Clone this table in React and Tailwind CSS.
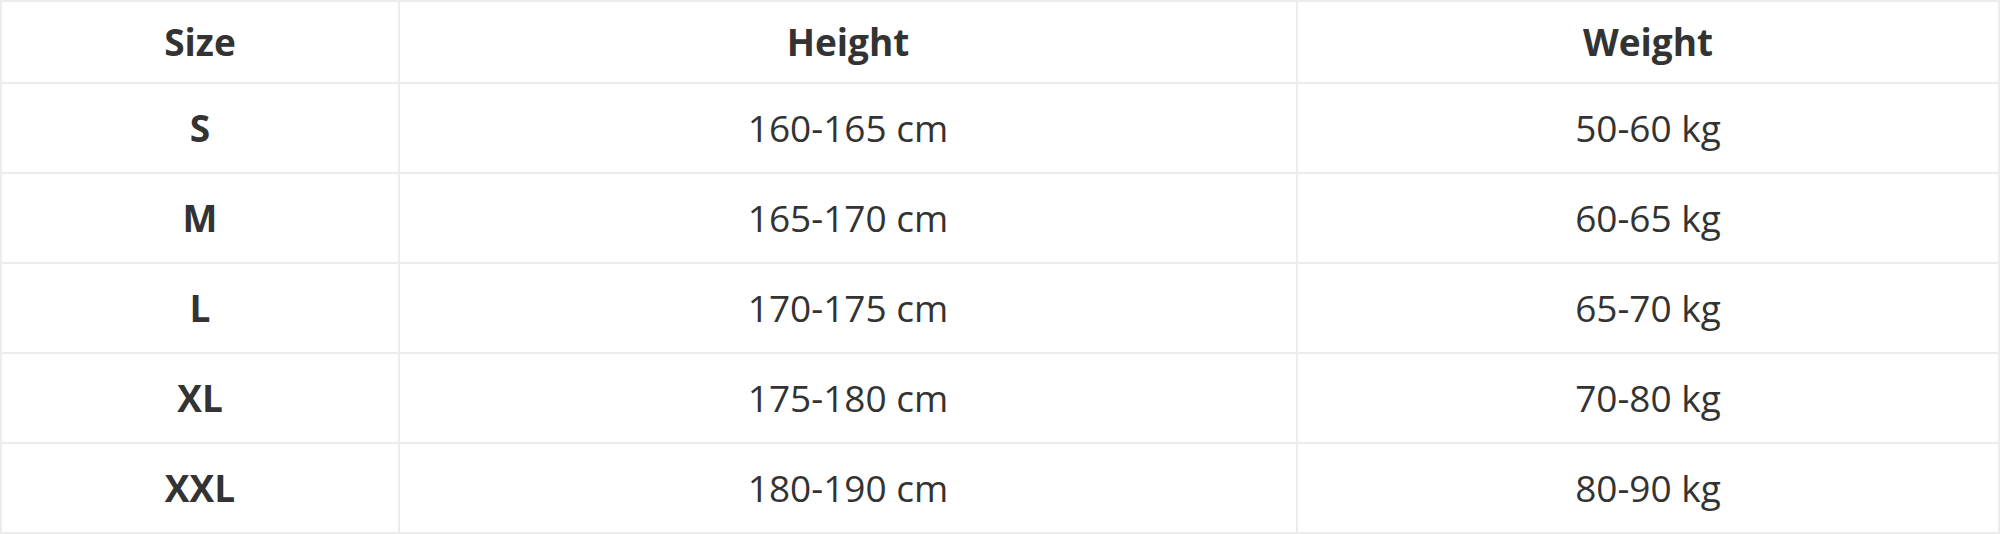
const rows = [
  { size: 'S', height: '160-165 cm', weight: '50-60 kg' },
  { size: 'M', height: '165-170 cm', weight: '60-65 kg' },
  { size: 'L', height: '170-175 cm', weight: '65-70 kg' },
  { size: 'XL', height: '175-180 cm', weight: '70-80 kg' },
  { size: 'XXL', height: '180-190 cm', weight: '80-90 kg' },
]

export default function App() {
  return (
    <div className="bg-white" style={{ fontFamily: '"Open Sans", "Noto Sans", sans-serif' }}>
      <table className="w-[2000px] table-fixed border-collapse text-[37px] text-[#333]">
        <colgroup>
          <col className="w-[398px]" />
          <col className="w-[898px]" />
          <col />
        </colgroup>
        <thead>
          <tr className="h-[82px]">
            <th className="border-2 border-[#ececec] font-bold">Size</th>
            <th className="border-2 border-[#ececec] font-bold">Height</th>
            <th className="border-2 border-[#ececec] font-bold">Weight</th>
          </tr>
        </thead>
        <tbody>
          {rows.map((r) => (
            <tr key={r.size} className="h-[90px]">
              <td className="border-2 border-[#ececec] text-center font-bold">{r.size}</td>
              <td className="border-2 border-[#ececec] text-center">{r.height}</td>
              <td className="border-2 border-[#ececec] text-center">{r.weight}</td>
            </tr>
          ))}
        </tbody>
      </table>
    </div>
  )
}
